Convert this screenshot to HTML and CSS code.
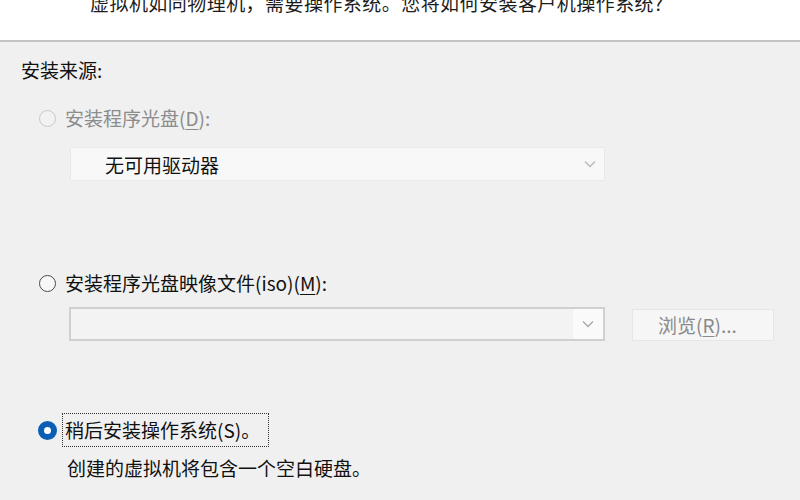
FILE: index.html
```html
<!DOCTYPE html>
<html lang="zh-CN">
<head>
<meta charset="utf-8">
<link rel="stylesheet" href="styles.css">
</head>
<body>
<div class="header">
  <p class="intro">虚拟机如同物理机，需要操作系统。您将如何安装客户机操作系统?</p>
</div>
<div class="main">
  <div class="section-title">安装来源:</div>

  <div class="radio-row disabled r1">
    <span class="radio"></span>
    <span class="label">安装程序光盘(<u>D</u>):</span>
  </div>
  <div class="select disabled-select">
    <span class="select-text">无可用驱动器</span>
    <svg class="chev" width="12" height="8" viewBox="0 0 12 8"><path d="M1 1.5 L6 6.5 L11 1.5" fill="none" stroke="#b8b8b8" stroke-width="1.3"/></svg>
  </div>

  <div class="radio-row r2">
    <span class="radio"></span>
    <span class="label">安装程序光盘映像文件(iso)(<u>M</u>):</span>
  </div>
  <div class="combo-row">
    <div class="select combo">
      <span class="select-text"></span>
      <span class="chev-box"><svg class="chev" width="12" height="8" viewBox="0 0 12 8"><path d="M1 1.5 L6 6.5 L11 1.5" fill="none" stroke="#a8a8a8" stroke-width="1.3"/></svg></span>
    </div>
    <div class="button">浏览(<u>R</u>)...</div>
  </div>

  <div class="radio-row checked r3">
    <span class="radio"></span>
    <span class="label focus">稍后安装操作系统(S)。</span>
  </div>
  <div class="desc">创建的虚拟机将包含一个空白硬盘。</div>
</div>
</body>
</html>
```

FILE: styles.css
```css
html, body {
  margin: 0;
  padding: 0;
  width: 800px;
  height: 500px;
  overflow: hidden;
  background: #f0f0f0;
  font-family: "Noto Sans CJK SC", "Microsoft YaHei", sans-serif;
  font-size: 19px;
  color: #111;
}

.header {
  height: 40px;
  background: #ffffff;
  border-bottom: 2px solid #c4c4c4;
  overflow: hidden;
  padding-left: 90px;
  box-sizing: content-box;
}

.intro {
  margin: -11px 0 0 0;
  line-height: 28px;
  color: #1c1c1c;
  white-space: nowrap;
  letter-spacing: 0.45px;
}

.main {
  padding: 14px 0 0 21px;
}

.section-title {
  line-height: 28px;
  height: 28px;
}

.radio-row {
  display: flex;
  align-items: center;
  height: 28px;
  line-height: 28px;
  margin-left: 18px;
}

.r1 { margin-top: 20px; }
.r2 { margin-top: 88px; }
.r3 { margin-top: 75px; }

.radio {
  width: 17px;
  height: 17px;
  box-sizing: border-box;
  border-radius: 50%;
  border: 1.5px solid #4a4a4a;
  background: #f7f7f7;
  flex: none;
  margin-right: 9px;
}

.disabled .radio {
  border-color: #c8c8c8;
  background: #f2f2f2;
}

.disabled .label {
  color: #8c8c8c;
}

.checked .radio {
  width: 19px;
  height: 19px;
  margin-left: -1px;
  margin-right: 6px;
  border: 6px solid #0a5fb4;
  background: #ffffff;
}

.label u {
  text-decoration-thickness: 1px;
  text-underline-offset: 3px;
}

.focus {
  outline: 1px dotted #333;
  outline-offset: 0;
  line-height: 28px;
  padding: 2px 8px 2px 2px;
}

.select {
  display: flex;
  align-items: center;
  justify-content: space-between;
  box-sizing: border-box;
  height: 34px;
}

.disabled-select {
  margin: 15px 0 0 49px;
  width: 535px;
  background: #f8f8f8;
  border: 1px solid #e9e9e9;
  padding: 0 8px 0 34px;
  color: #111;
}

.combo-row {
  display: flex;
  align-items: flex-start;
  margin: 10px 0 0 48px;
}

.combo {
  width: 536px;
  background: #f3f3f3;
  border: 2px solid #d0d0d0;
  padding: 0;
}

.chev-box {
  width: 30px;
  height: 30px;
  background: #fafafa;
  display: flex;
  align-items: center;
  justify-content: center;
}

.button {
  margin-left: 27px;
  margin-top: 2px;
  width: 142px;
  height: 32px;
  box-sizing: border-box;
  background: #f6f6f6;
  border: 1px solid #e6e6e6;
  color: #8a8a8a;
  line-height: 30px;
  padding-left: 25px;
}

.button u {
  text-underline-offset: 3px;
}

.desc {
  margin: 10px 0 0 46px;
  line-height: 28px;
}
```
